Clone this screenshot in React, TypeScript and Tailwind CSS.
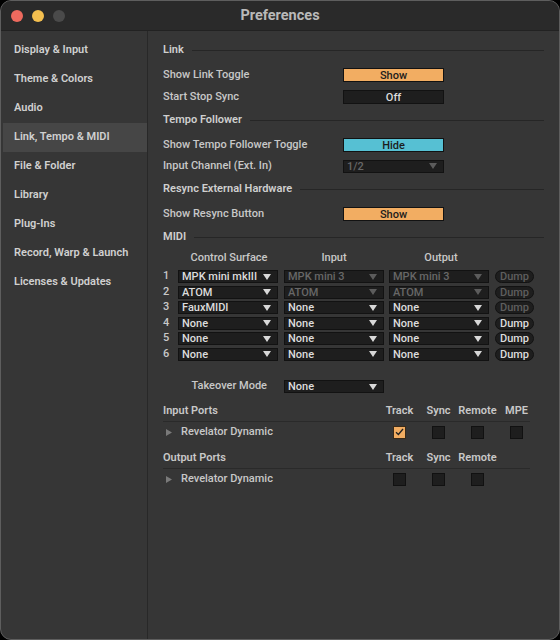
import React from "react"

const sidebar = [
  "Display & Input",
  "Theme & Colors",
  "Audio",
  "Link, Tempo & MIDI",
  "File & Folder",
  "Library",
  "Plug-Ins",
  "Record, Warp & Launch",
  "Licenses & Updates",
]

const midiRows = [
  { cs: "MPK mini mkIII", input: "MPK mini 3", output: "MPK mini 3", dim: true },
  { cs: "ATOM", input: "ATOM", output: "ATOM", dim: true },
  { cs: "FauxMIDI", input: "None", output: "None", dim: true, ioBright: true },
  { cs: "None", input: "None", output: "None", dim: false },
  { cs: "None", input: "None", output: "None", dim: false },
  { cs: "None", input: "None", output: "None", dim: false },
]

function Arrow({ dim }: { dim?: boolean }) {
  return (
    <svg width="8" height="6" viewBox="0 0 8 6" className="shrink-0">
      <path d="M0 0 H8 L4 6 Z" fill={dim ? "#5c5c5c" : "#d8d8d8"} />
    </svg>
  )
}

function Dropdown({ value, dim, w = "w-[100px]" }: { value: string; dim?: boolean; w?: string }) {
  return (
    <div className={`${w} h-[13px] flex items-center justify-between pl-[3px] pr-[6px] bg-[#1e1e1e] border border-[#121212] shrink-0`}>
      <span className={`leading-none font-medium ${dim ? "text-[#676767]" : "text-[#dcdcdc]"}`}>{value}</span>
      <Arrow dim={dim} />
    </div>
  )
}

function Header({ title, h }: { title: string; h: string }) {
  return (
    <div className={`flex items-center gap-2 ${h}`}>
      <span className="font-semibold text-[#cfcfcf]">{title}</span>
      <div className="flex-1 h-px bg-[#262626]" />
    </div>
  )
}

function Setting({ label, h, children }: { label: string; h: string; children: React.ReactNode }) {
  return (
    <div className={`flex items-center ${h}`}>
      <span className="w-[180px] shrink-0 font-medium text-[#c8c8c8]">{label}</span>
      {children}
    </div>
  )
}

function Toggle({ text, color }: { text: string; color: string }) {
  return (
    <div className={`w-[101px] h-[14px] flex items-center justify-center border border-[#121212] font-medium ${color}`}>
      <span className="leading-none">{text}</span>
    </div>
  )
}

function Box({ checked }: { checked?: boolean }) {
  return (
    <div className={`w-[13px] h-[13px] border flex items-center justify-center ${checked ? "bg-[#f2ad62] border-[#3a2a18]" : "bg-[#1e1e1e] border-[#111]"}`}>
      {checked && (
        <svg width="9" height="8" viewBox="0 0 9 8">
          <path d="M1 4.2 L3.4 6.5 L8 1" stroke="#222" strokeWidth="1.3" fill="none" />
        </svg>
      )}
    </div>
  )
}

function Ports({ title, cols, boxes }: { title: string; cols: string[]; boxes: boolean[] }) {
  return (
    <div className="w-[367px]">
      <div className="flex items-center h-[20px] border-b border-[#2a2a2a]">
        <span className="w-[217px] shrink-0 font-semibold text-[#c8c8c8]">{title}</span>
        {cols.map((c) => (
          <span key={c} className="w-[39px] shrink-0 text-center whitespace-nowrap font-semibold text-[#c8c8c8]">{c}</span>
        ))}
      </div>
      <div className="flex items-center h-[20px]">
        <div className="w-[217px] shrink-0 flex items-center">
          <svg width="6" height="7" viewBox="0 0 6 7" className="ml-[3px] mr-[9px]">
            <path d="M0 0 L6 3.5 L0 7 Z" fill="#7a7a7a" />
          </svg>
          <span className="font-medium text-[#c8c8c8]">Revelator Dynamic</span>
        </div>
        {boxes.map((b, i) => (
          <div key={i} className="w-[39px] shrink-0 flex justify-center">
            <Box checked={b} />
          </div>
        ))}
      </div>
    </div>
  )
}

export default function App() {
  return (
    <div className="w-[560px] h-[640px] bg-black" style={{ fontFamily: "Roboto, 'Noto Sans', sans-serif" }}>
      <div className="w-full h-full rounded-[11px] border border-[#5e5e5e] overflow-hidden flex flex-col text-[11px] bg-[#363636]">
        <div className="h-[30px] shrink-0 bg-[#2a2a2a] relative flex items-center justify-center border-b border-[#222]">
          <div className="absolute left-[10px] top-[9px] flex gap-[9px]">
            <div className="w-[12px] h-[12px] rounded-full bg-[#ed6a5e]" />
            <div className="w-[12px] h-[12px] rounded-full bg-[#f4bf4f]" />
            <div className="w-[12px] h-[12px] rounded-full bg-[#4a4a4a]" />
          </div>
          <span className="text-[14.5px] font-bold text-[#b9b9b9]">Preferences</span>
        </div>
        <div className="flex-1 flex">
          <div className="w-[147px] shrink-0 border-r border-[#282828] pt-[5px] pl-[2px]">
            {sidebar.map((s) => (
              <div
                key={s}
                className={`h-[29px] flex items-center pl-[11px] font-semibold text-[#d0d0d0] ${s === "Link, Tempo & MIDI" ? "bg-[#464646]" : ""}`}
              >
                {s}
              </div>
            ))}
          </div>
          <div className="flex-1 pl-[15px] pr-[15px] pt-[8px]">
            <Header title="Link" h="h-[22px]" />
            <Setting label="Show Link Toggle" h="h-[28px]">
              <Toggle text="Show" color="bg-[#f2ad62] text-[#1c1c1c]" />
            </Setting>
            <Setting label="Start Stop Sync" h="h-[16px]">
              <Toggle text="Off" color="bg-[#1e1e1e] text-[#dcdcdc]" />
            </Setting>
            <Header title="Tempo Follower" h="h-[30px]" />
            <Setting label="Show Tempo Follower Toggle" h="h-[20px]">
              <Toggle text="Hide" color="bg-[#56c0d3] text-[#1c1c1c]" />
            </Setting>
            <Setting label="Input Channel (Ext. In)" h="h-[22px]">
              <Dropdown value="1/2" dim w="w-[101px]" />
            </Setting>
            <Header title="Resync External Hardware" h="h-[24px]" />
            <Setting label="Show Resync Button" h="h-[26px]">
              <Toggle text="Show" color="bg-[#f2ad62] text-[#1c1c1c]" />
            </Setting>
            <Header title="MIDI" h="h-[20px]" />
            <div className="flex items-center h-[23px] pl-[15px] font-medium text-[#c8c8c8]">
              <span className="w-[102px] text-center">Control Surface</span>
              <span className="w-[108px] text-center">Input</span>
              <span className="w-[106px] text-center">Output</span>
            </div>
            <div className="flex flex-col gap-[2.5px]">
              {midiRows.map((r, i) => (
                <div key={i} className="flex items-center h-[13px]">
                  <span className="w-[15px] shrink-0 font-medium text-[#c8c8c8]">{i + 1}</span>
                  <Dropdown value={r.cs} />
                  <div className="w-[6px] shrink-0" />
                  <Dropdown value={r.input} dim={r.dim && !r.ioBright} />
                  <div className="w-[5px] shrink-0" />
                  <Dropdown value={r.output} dim={r.dim && !r.ioBright} />
                  <div className="w-[6px] shrink-0" />
                  <div className="w-[39px] shrink-0 h-[13px] rounded-full bg-[#1e1e1e] border border-[#121212] flex items-center justify-center">
                    <span className={`leading-none font-medium ${r.dim ? "text-[#5e5e5e]" : "text-[#dcdcdc]"}`}>Dump</span>
                  </div>
                </div>
              ))}
            </div>
            <div className="flex items-center h-[13px] mt-[19.5px]">
              <span className="w-[121px] shrink-0 text-right pr-[17px] font-medium text-[#c8c8c8]">Takeover Mode</span>
              <Dropdown value="None" />
            </div>
            <div className="mt-[9px]">
              <Ports title="Input Ports" cols={["Track", "Sync", "Remote", "MPE"]} boxes={[true, false, false, false]} />
            </div>
            <div className="mt-[7px]">
              <Ports title="Output Ports" cols={["Track", "Sync", "Remote"]} boxes={[false, false, false]} />
            </div>
          </div>
        </div>
      </div>
    </div>
  )
}
